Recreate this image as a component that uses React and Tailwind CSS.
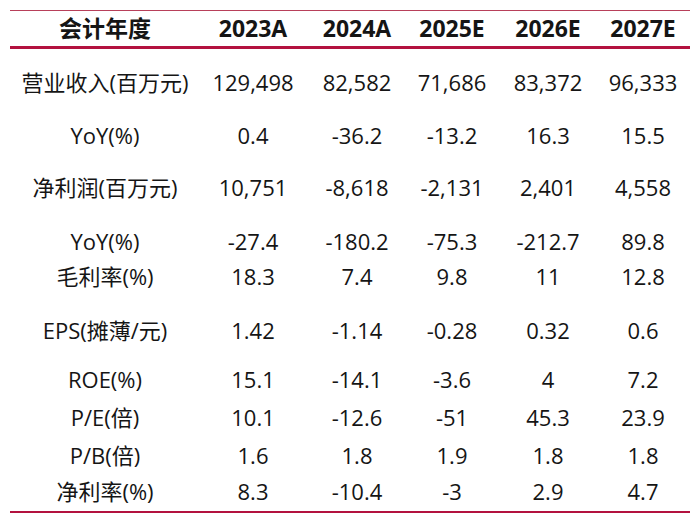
const years = ["2023A", "2024A", "2025E", "2026E", "2027E"];

const rows = [
  { label: "营业收入(百万元)", values: ["129,498", "82,582", "71,686", "83,372", "96,333"], h: "h-[53px]" },
  { label: "YoY(%)", values: ["0.4", "-36.2", "-13.2", "16.3", "15.5"], h: "h-[52px]" },
  { label: "净利润(百万元)", values: ["10,751", "-8,618", "-2,131", "2,401", "4,558"], h: "h-[54px]" },
  { label: "YoY(%)", values: ["-27.4", "-180.2", "-75.3", "-212.7", "89.8"], h: "h-[35px]" },
  { label: "毛利率(%)", values: ["18.3", "7.4", "9.8", "11", "12.8"], h: "h-[54px]" },
  { label: "EPS(摊薄/元)", values: ["1.42", "-1.14", "-0.28", "0.32", "0.6"], h: "h-[49px]" },
  { label: "ROE(%)", values: ["15.1", "-14.1", "-3.6", "4", "7.2"], h: "h-[38px]" },
  { label: "P/E(倍)", values: ["10.1", "-12.6", "-51", "45.3", "23.9"], h: "h-[38px]" },
  { label: "P/B(倍)", values: ["1.6", "1.8", "1.9", "1.8", "1.8"], h: "h-[36px]" },
  { label: "净利率(%)", values: ["8.3", "-10.4", "-3", "2.9", "4.7"], h: "h-[35px]" },
];

const cols = "grid grid-cols-[190px_106px_102px_88px_104px_86px]";

export default function App() {
  return (
    <div className="w-[700px] h-[521px] bg-white pt-[10px] px-[10px] text-[#151515] font-['Open_Sans','Noto_Sans_CJK_SC',sans-serif]">
      <div className="w-[680px]">
        {/* header */}
        <div className={`${cols} h-[39px] items-center border-t border-[#b8405a] border-b-[3px] border-b-[#b3123f] text-[23px] font-bold`}>
          <div className="text-center">会计年度</div>
          {years.map((y) => (
            <div key={y} className="text-center">{y}</div>
          ))}
        </div>

        {/* body */}
        <div className="pt-[18px] border-b-2 border-[#b3123f]">
          {rows.map((r, i) => (
            <div key={i} className={`${cols} ${r.h} items-start text-[22px] leading-[30px]`}>
              <div className="text-center">{r.label}</div>
              {r.values.map((v, j) => (
                <div key={j} className="text-center">{v}</div>
              ))}
            </div>
          ))}
        </div>
      </div>
    </div>
  );
}
